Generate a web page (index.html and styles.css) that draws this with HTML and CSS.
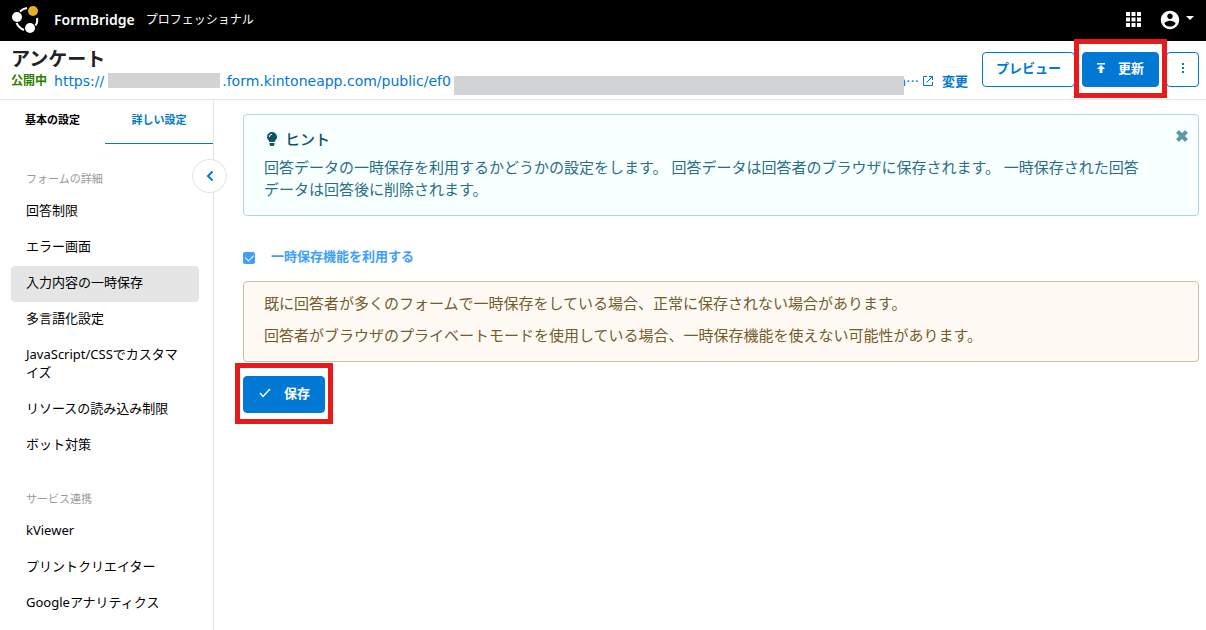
FILE: index.html
```
<!DOCTYPE html>
<html lang="ja">
<head>
<title>アンケート - FormBridge</title>
<meta charset="utf-8">
<meta name="viewport" content="width=device-width, initial-scale=1">
<link rel="stylesheet" href="styles.css">
</head>
<body>

<header class="topbar">
  <svg class="logo" viewBox="0 0 28 28" aria-hidden="true">
    <g fill="none" stroke="#fff" stroke-width="2">
      <path d="M8 5.500Q11 2.500 15 2"/>
      <path d="M25 12Q26 16 23.500 19.500"/>
      <path d="M4.500 17Q7 22 12 24"/>
    </g>
    <circle cx="5" cy="11" r="5" fill="#fff"/>
    <circle cx="21" cy="5" r="5" fill="#e8ae25"/>
    <circle cx="18" cy="22" r="5" fill="#fff"/>
  </svg>
  <strong class="brand">FormBridge</strong>
  <span class="plan">プロフェッショナル</span>
  <button class="icon-button apps" aria-label="アプリ一覧">
    <svg width="15" height="15" viewBox="0 0 15 15" fill="#fff"><path d="M0 0h4v4H0zM5.500 0h4v4h-4zM11 0h4v4h-4zM0 5.500h4v4H0zM5.500 5.500h4v4h-4zM11 5.500h4v4h-4zM0 11h4v4H0zM5.500 11h4v4h-4zM11 11h4v4h-4z"/></svg>
  </button>
  <button class="icon-button" aria-label="アカウント">
    <svg width="22" height="22" viewBox="0 0 24 24" fill="#fff"><path d="M12 2C6.480 2 2 6.480 2 12s4.480 10 10 10 10-4.480 10-10S17.520 2 12 2zm0 3c1.660 0 3 1.340 3 3s-1.340 3-3 3-3-1.340-3-3 1.340-3 3-3zm0 14.200c-2.500 0-4.710-1.280-6-3.220.03-1.990 4-3.080 6-3.080 1.990 0 5.970 1.090 6 3.080-1.290 1.940-3.500 3.220-6 3.220z"/></svg>
    <svg class="caret" width="8" height="4" viewBox="0 0 8 4" fill="#fff"><path d="M0 0h8L4 4z"/></svg>
  </button>
</header>

<div class="form-bar">
  <div class="form-info">
    <h1>アンケート</h1>
    <div class="url-row">
      <span class="status">公開中</span>
      <a class="url" href="#"><span>https://</span><span class="mask mask-domain"></span><span>.form.kintoneapp.com/public/ef0</span><span class="mask mask-id"></span><span class="url-end">a⋯</span>
        <svg width="12" height="12" viewBox="0 0 12 12" fill="none" stroke="#0078d4"><path d="M5 1.500H1.500v9h9V7M7 1.500h3.500V5M10.500 1.500l-6 6"/></svg>
      </a>
      <a class="change" href="#">変更</a>
    </div>
  </div>
  <div class="actions">
    <button class="btn preview">プレビュー</button>
    <div class="highlight">
      <button class="btn primary update">
        <svg width="8" height="10" viewBox="0 0 8 10" fill="#fff"><path d="M0 0h8v1.500H0zM4 2l4 4H5.500v4h-3V6H0z"/></svg>
        更新
      </button>
    </div>
    <button class="btn more" aria-label="その他">
      <svg width="4" height="12" viewBox="0 0 4 12" fill="#0078d4"><path d="M1 1h2v2H1zM1 5h2v2H1zM1 9h2v2H1z"/></svg>
    </button>
  </div>
</div>

<div class="layout">
  <aside class="sidebar">
    <div class="tabs">
      <a href="#">基本の設定</a>
      <a class="active" href="#">詳しい設定</a>
    </div>
    <button class="collapse" aria-label="メニューを閉じる">
      <svg width="8" height="12" viewBox="0 0 8 12" fill="none" stroke="#0078d4" stroke-width="2"><path d="M6.500 1.500L2 6l4.500 4.500"/></svg>
    </button>
    <nav>
      <h2>フォームの詳細</h2>
      <ul>
        <li><a href="#">回答制限</a></li>
        <li><a href="#">エラー画面</a></li>
        <li><a class="selected" href="#">入力内容の一時保存</a></li>
        <li><a href="#">多言語化設定</a></li>
        <li><a href="#">JavaScript/CSSでカスタマイズ</a></li>
        <li><a href="#">リソースの読み込み制限</a></li>
        <li><a href="#">ボット対策</a></li>
      </ul>
      <h2>サービス連携</h2>
      <ul>
        <li><a href="#">kViewer</a></li>
        <li><a href="#">プリントクリエイター</a></li>
        <li><a href="#">Googleアナリティクス</a></li>
      </ul>
    </nav>
  </aside>

  <main>
    <section class="hint">
      <div class="hint-title">
        <svg width="12" height="16" viewBox="0 0 12 16" fill="#0c5468"><path d="M6 1a5 5 0 0 0-5 5c0 2.300 2 3.300 2.500 5h5C9 9.300 11 8.300 11 6a5 5 0 0 0-5-5zM3.500 12h5v1.500l-1 1.500h-3l-1-1.500z"/><path d="M3.300 6A2.700 2.700 0 0 1 6 3.300" fill="none" stroke="#f7ffff"/></svg>
        <h2>ヒント</h2>
        <button class="close" aria-label="閉じる">
          <svg width="12" height="12" viewBox="0 0 12 12" stroke="#5d96a6" stroke-width="4"><path d="M1.500 1.500l9 9M10.500 1.500l-9 9"/></svg>
        </button>
      </div>
      <p>回答データの一時保存を利用するかどうかの設定をします。 回答データは回答者のブラウザに保存されます。 一時保存された回答データは回答後に削除されます。</p>
    </section>

    <form>
      <div class="check-row">
        <input type="checkbox" id="useDraft" checked>
        <label for="useDraft">一時保存機能を利用する</label>
      </div>
      <div class="warning">
        <p>既に回答者が多くのフォームで一時保存をしている場合、正常に保存されない場合があります。</p>
        <p>回答者がブラウザのプライベートモードを使用している場合、一時保存機能を使えない可能性があります。</p>
      </div>
      <div class="highlight save-box">
        <button type="button" class="btn primary save">
          <svg width="13" height="10" viewBox="0 0 13 10" fill="none" stroke="#fff" stroke-width="1.500"><path d="M2 5l3 3.500L12 1"/></svg>
          保存
        </button>
      </div>
    </form>
  </main>
</div>

</body>
</html>
```
FILE: styles.css
```
* {
  box-sizing: border-box;
}

body {
  margin: 0;
  min-height: 100vh;
  display: flex;
  flex-direction: column;
  font-family: "Noto Sans", "Noto Sans CJK JP", sans-serif;
  font-size: 13px;
  line-height: 18px;
  color: #000;
  background: #fff;
}

h1, h2, p, ul {
  margin: 0;
  padding: 0;
}

a {
  color: #0078d4;
  text-decoration: none;
}

svg {
  flex: none;
}

button {
  font-family: inherit;
  cursor: pointer;
}

/* Black bar on top */
.topbar {
  display: flex;
  align-items: center;
  height: 41px;
  padding: 0 12px 2px;
  background: #000;
  color: #fff;
}

.logo {
  width: 28px;
  height: 28px;
}

.brand {
  margin: 0 11px 0 14px;
  font-size: 14px;
  font-weight: 600;
}

.plan {
  font-size: 12px;
}

.icon-button {
  display: flex;
  align-items: center;
  padding: 0;
  border: none;
  background: none;
}

.apps {
  margin-left: auto;
  margin-right: 18px;
}

.caret {
  margin: 0 0 4px 5px;
}

/* Form name, url and buttons */
.form-bar {
  display: flex;
  justify-content: space-between;
  gap: 14px;
  height: 59px;
  padding: 8px 7px 0 11px;
  border-bottom: 1px solid #e5e5e5;
}

.form-info {
  flex: 1;
  min-width: 0;
}

h1 {
  font-size: 19px;
  line-height: 20px;
  color: #222;
}

.url-row {
  display: flex;
  align-items: center;
  height: 24px;
}

.status {
  margin-right: 7px;
  font-size: 12px;
  font-weight: bold;
  color: #2b8000;
}

.url {
  display: flex;
  align-items: center;
  flex: 1;
  min-width: 0;
  font-family: "DejaVu Sans", "Noto Sans CJK JP", sans-serif;
  font-size: 14px;
}

.mask {
  background: #d2d3d4;
}

.mask-domain {
  width: 112px;
  height: 15px;
  margin: 0 2px 2px 4px;
}

/* Covers part of the last letter of the id */
.mask-id {
  position: relative;
  flex: 1;
  height: 19px;
  margin: 8px -5px 0 3px;
}

.url-end {
  margin-right: 3px;
  font-family: "Noto Sans CJK JP", sans-serif;
  font-size: 13px;
}

.change {
  margin-left: 8px;
  font-weight: bold;
}

.actions {
  display: flex;
  gap: 7px;
  padding-top: 3px;
}

.btn {
  display: flex;
  align-items: center;
  justify-content: center;
  height: 35px;
  padding: 0 13px 3px;
  border: 1px solid #0078d4;
  border-radius: 4px;
  background: #fff;
  color: #0078d4;
  font-size: 13px;
  font-weight: bold;
  line-height: 18px;
}

.primary {
  gap: 13px;
  padding: 0 14px 3px;
  background: #0078d4;
  color: #fff;
}

.more {
  width: 33px;
}

/* Red frame drawn around a button */
.highlight {
  position: relative;
  height: 35px;
}

.highlight::after {
  content: "";
  position: absolute;
  inset: -13px -8px -11px;
  border: 5px solid #e81a1c;
  pointer-events: none;
}

/* Two columns */
.layout {
  display: flex;
  flex: 1;
}

.sidebar {
  position: relative;
  flex: none;
  width: 214px;
  border-right: 1px solid #e5e5e5;
}

.tabs {
  display: grid;
  grid-template-columns: 105px 1fr;
  height: 44px;
  font-size: 11px;
  font-weight: bold;
  text-align: center;
}

.tabs a {
  padding-top: 11px;
  color: #000;
}

.tabs .active {
  color: #0078d4;
  border-bottom: 1px solid #0078d4;
}

.collapse {
  position: absolute;
  top: 59px;
  right: -14px;
  display: flex;
  align-items: center;
  justify-content: center;
  width: 35px;
  height: 34px;
  padding: 0;
  border: 1px solid #e5e5e5;
  border-radius: 50%;
  background: #fff;
}

nav {
  padding: 0 14px 0 11px;
}

nav h2 {
  padding: 26px 0 6px 15px;
  font-size: 11px;
  font-weight: normal;
  color: #999;
}

nav ul {
  list-style: none;
}

nav li a {
  display: block;
  padding: 7px 15px 11px;
  border-radius: 4px;
  color: #000;
}

nav .selected {
  background: #e5e5e5;
}

main {
  flex: 1;
  min-width: 0;
  padding: 14px 7px 14px 29px;
}

.hint,
.warning {
  border: 1px solid;
  border-radius: 4px;
  font-size: 15px;
  line-height: 22px;
}

.hint {
  padding: 13px 20px 15px;
  border-color: #abd9e0;
  background: #f7ffff;
  color: #286f86;
}

.hint-title {
  display: flex;
  align-items: center;
  gap: 7px;
  margin-bottom: 6px;
  padding-left: 2px;
}

.hint h2 {
  font-size: 15px;
  font-weight: 500;
  color: #0c5468;
}

.hint p {
  padding-right: 28px;
}

.close {
  display: flex;
  margin: -7px -10px 0 auto;
  padding: 0;
  border: none;
  background: none;
}

.check-row {
  display: flex;
  align-items: center;
  gap: 16px;
  margin: 31px 0 16px;
}

.check-row input {
  appearance: none;
  display: grid;
  place-items: center;
  width: 12px;
  height: 12px;
  margin: 3px 0 0;
  border-radius: 2px;
  background: #409eff;
}

.check-row input:checked::after {
  content: "";
  width: 4px;
  height: 7px;
  margin-bottom: 2px;
  border: solid #fff;
  border-width: 0 1px 1px 0;
  transform: rotate(45deg);
}

.check-row label {
  font-weight: bold;
  color: #409eff;
}

.warning {
  padding: 10px 20px 15px;
  border-color: #cdbfa5;
  background: #fffaf4;
  color: #755a2c;
}

.warning p + p {
  margin-top: 10px;
}

.save-box {
  width: fit-content;
  height: 37px;
  margin-top: 14px;
}

.save {
  height: 37px;
}
```
